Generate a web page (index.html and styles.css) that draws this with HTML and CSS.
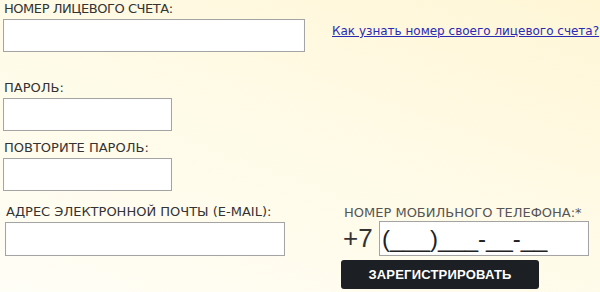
FILE: index.html
```html
<!DOCTYPE html>
<html lang="ru">
<head>
  <meta charset="UTF-8" />
  <title>Регистрация</title>
  <link rel="stylesheet" href="styles.css">
</head>
<body>
  <form class="reg">
    <div class="row">
      <div class="field">
        <label class="lbl lbl-account">НОМЕР ЛИЦЕВОГО СЧЕТА:</label>
        <input class="inp inp-account" type="text">
      </div>
      <a class="help" href="#">Как узнать номер своего лицевого счета?</a>
    </div>

    <div class="field field-pass">
      <label class="lbl">ПАРОЛЬ:</label>
      <input class="inp inp-short" type="password">
    </div>

    <div class="field field-repeat">
      <label class="lbl">ПОВТОРИТЕ ПАРОЛЬ:</label>
      <input class="inp inp-short" type="password">
    </div>

    <div class="row row-bottom">
      <div class="field field-mail">
        <label class="lbl">АДРЕС ЭЛЕКТРОННОЙ ПОЧТЫ (E-MAIL):</label>
        <input class="inp inp-mail" type="text">
      </div>
      <div class="field field-phone">
        <label class="lbl lbl-phone">НОМЕР МОБИЛЬНОГО ТЕЛЕФОНА:*</label>
        <div class="phone">
          <span class="prefix">+7</span>
          <input class="inp inp-phone" type="text" value="(___)___-__-__">
        </div>
        <button class="btn" type="button">ЗАРЕГИСТРИРОВАТЬ</button>
      </div>
    </div>
  </form>
</body>
</html>
```

FILE: styles.css
```css
body {
  margin: 0;
  padding: 0;
  width: 600px;
  height: 292px;
  overflow: hidden;
  font-family: "DejaVu Sans", Verdana, sans-serif;
  background: linear-gradient(200deg, #fff6d6 0%, #fffbe8 50%, #fffef6 100%);
}
.reg {
  padding: 1px 0 0 3px;
}
.row {
  display: flex;
}
.field {
  display: flex;
  flex-direction: column;
}
.lbl {
  font-size: 13px;
  line-height: 15px;
  color: #333;
  padding-left: 1px;
  margin-bottom: 3px;
}
.lbl-account {
  letter-spacing: -0.45px;
}
.inp {
  box-sizing: border-box;
  height: 33px;
  margin: 0;
  border: 1px solid #a4a4a4;
  background: #fff;
  box-shadow: inset 0 0 1px rgba(0, 0, 0, 0.08);
}
.inp-account {
  width: 302px;
}
.help {
  margin: 23px 0 0 27px;
  font-size: 12px;
  line-height: 15px;
  color: #2a2ab4;
  text-decoration: underline;
  white-space: nowrap;
}
.field-pass {
  margin-top: 28px;
}
.field-repeat {
  margin-top: 9px;
}
.inp-short {
  width: 169px;
}
.row-bottom {
  margin-top: 13px;
}
.field-mail {
  padding-left: 2px;
}
.inp-mail {
  width: 280px;
  height: 34px;
}
.field-phone {
  margin-left: 58px;
  margin-top: 1px;
}
.lbl-phone {
  color: #555;
  margin-bottom: 1px;
}
.phone {
  display: flex;
  align-items: center;
}
.prefix {
  font-family: "Liberation Sans", Arial, sans-serif;
  font-size: 26px;
  color: #333;
  width: 36px;
}
.inp-phone {
  width: 210px;
  height: 35px;
  padding: 0 0 0 2px;
  font-family: "Liberation Sans", Arial, sans-serif;
  font-size: 24px;
  color: #222;
}
.btn {
  width: 198px;
  height: 29px;
  margin: 4px 0 0 -2px;
  border: 0;
  border-radius: 3px;
  background: #1c1f23;
  color: #fff;
  font-family: "Liberation Sans", Arial, sans-serif;
  font-size: 13px;
  font-weight: bold;
  letter-spacing: 0.2px;
}
```
